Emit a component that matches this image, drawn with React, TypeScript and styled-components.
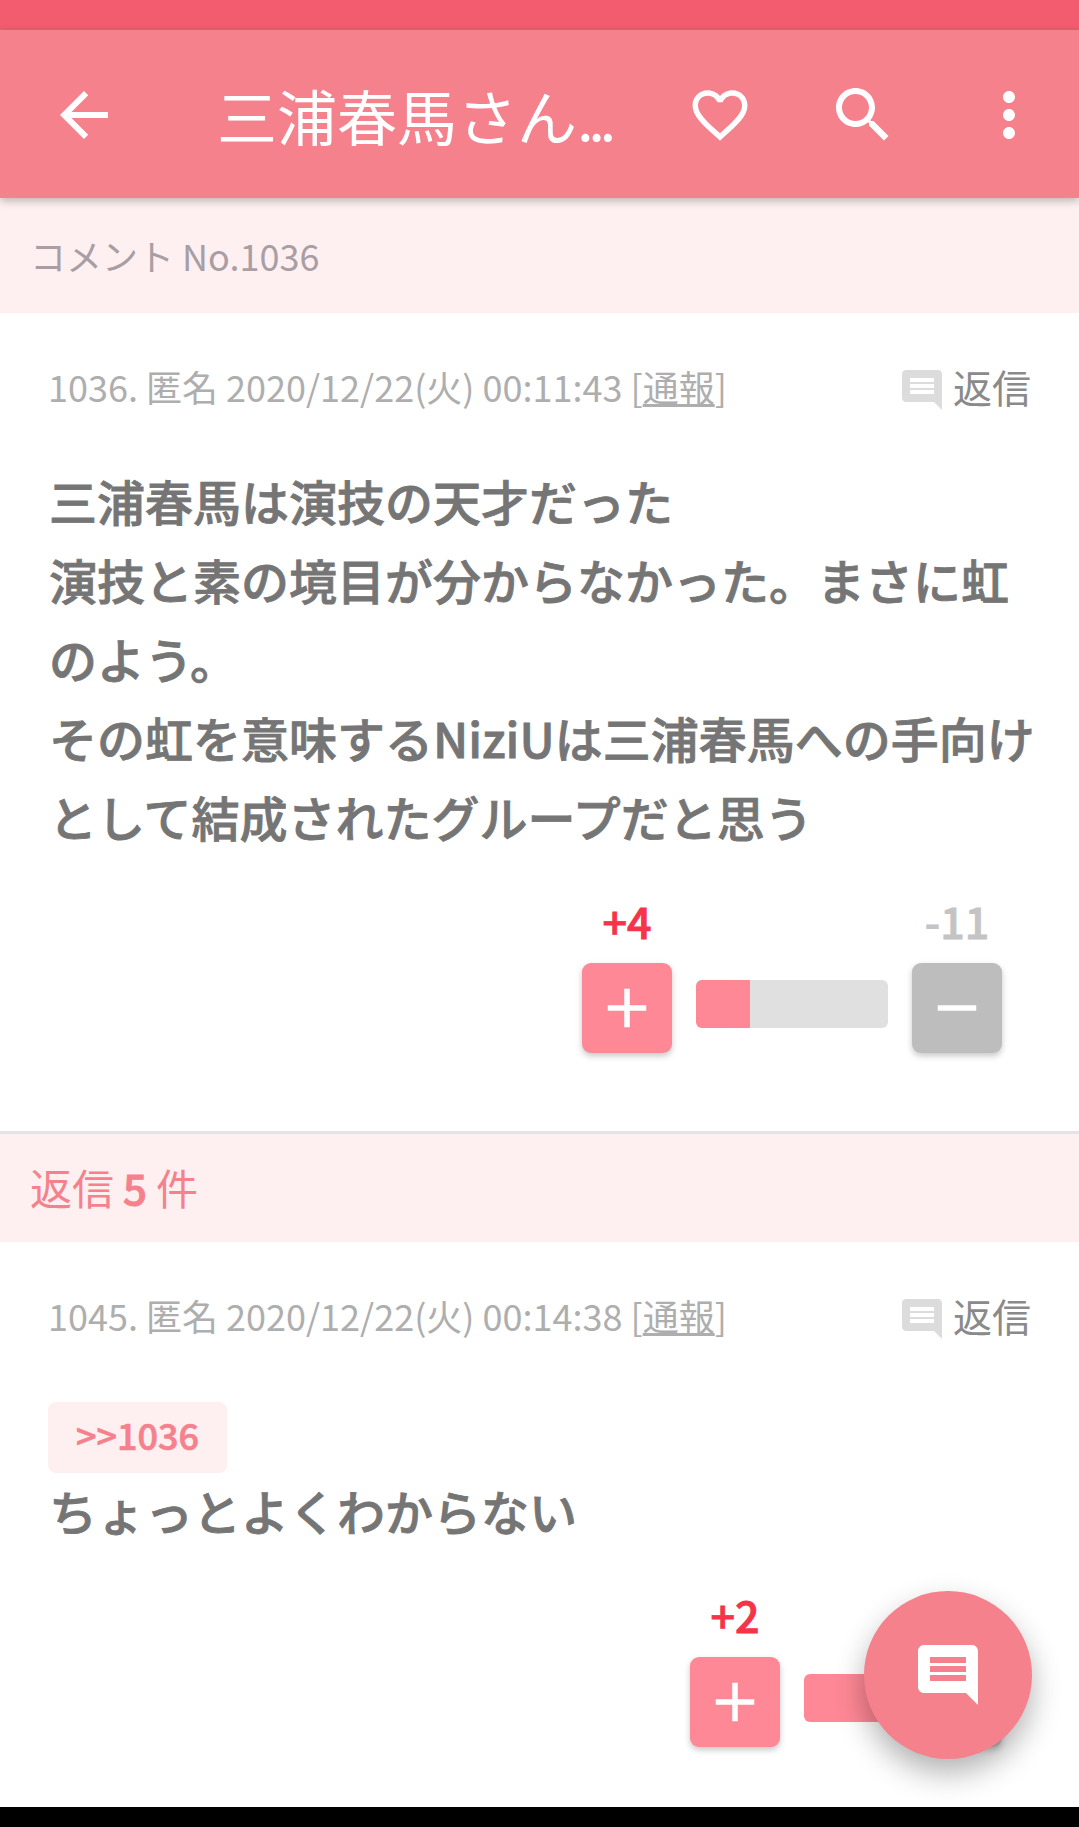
import { createGlobalStyle, styled } from 'styled-components';

const GlobalStyle = createGlobalStyle`
  html, body {
    margin: 0;
    padding: 0;
    background: #fff;
    overflow: hidden;
  }
  * {
    box-sizing: border-box;
  }
`;

const icons = {
  back: 'M20 11H7.83l5.59-5.59L12 4l-8 8 8 8 1.41-1.41L7.83 13H20v-2z',
  heart:
    'M16.5 3c-1.74 0-3.41.81-4.5 2.09C10.91 3.81 9.24 3 7.5 3 4.42 3 2 5.42 2 8.5c0 3.78 3.4 6.86 8.55 11.54L12 21.35l1.45-1.32C18.6 15.36 22 12.28 22 8.5 22 5.42 19.58 3 16.5 3zm-4.4 15.55l-.1.1-.1-.1C7.14 14.24 4 11.39 4 8.5 4 6.5 5.5 5 7.5 5c1.54 0 3.04.99 3.57 2.36h1.87C13.46 5.99 14.96 5 16.5 5c2 0 3.5 1.5 3.5 3.5 0 2.89-3.14 5.74-7.9 10.05z',
  search:
    'M15.5 14h-.79l-.28-.27C15.41 12.59 16 11.11 16 9.5 16 5.91 13.09 3 9.5 3S3 5.91 3 9.5 5.91 16 9.5 16c1.61 0 3.09-.59 4.23-1.57l.27.28v.79l5 4.99L20.49 19l-4.99-5zm-6 0C7.01 14 5 11.99 5 9.5S7.01 5 9.5 5 14 7.01 14 9.5 11.99 14 9.5 14z',
  more: 'M12 8c1.1 0 2-.9 2-2s-.9-2-2-2-2 .9-2 2 .9 2 2 2zm0 2c-1.1 0-2 .9-2 2s.9 2 2 2 2-.9 2-2-.9-2-2-2zm0 6c-1.1 0-2 .9-2 2s.9 2 2 2 2-.9 2-2-.9-2-2-2z',
  comment:
    'M21.99 4c0-1.1-.89-2-1.99-2H4c-1.1 0-2 .9-2 2v12c0 1.1.9 2 2 2h14l4 4-.01-18zM18 14H6v-2h12v2zm0-3H6V9h12v2zm0-3H6V6h12v2z',
  plus: 'M19 13h-6v6h-2v-6H5v-2h6V5h2v6h6v2z',
  minus: 'M19 13H5v-2h14v2z',
};

function Icon({ d, size, color }: { d: string; size: number; color: string }) {
  return (
    <svg width={size} height={size} viewBox="0 0 24 24" fill={color}>
      <path d={d} />
    </svg>
  );
}

function Votes({
  plus,
  minus,
  barWidth,
  fill,
}: {
  plus: string;
  minus: string;
  barWidth: number;
  fill: number;
}) {
  return (
    <VoteRow>
      <VoteColumn>
        <VoteCount $good>{plus}</VoteCount>
        <VoteButton $good>
          <Icon d={icons.plus} size={66} color="#fff" />
        </VoteButton>
      </VoteColumn>
      <Bar $width={barWidth}>
        <BarFill style={{ width: `${fill}%` }} />
      </Bar>
      <VoteColumn>
        <VoteCount>{minus}</VoteCount>
        <VoteButton>
          <Icon d={icons.minus} size={66} color="#fff" />
        </VoteButton>
      </VoteColumn>
    </VoteRow>
  );
}

function MetaLine({ no, date }: { no: string; date: string }) {
  return (
    <Meta>
      <MetaText>
        {no}. 匿名 {date} [<u>通報</u>]
      </MetaText>
      <ReplyLink>
        <Icon d={icons.comment} size={48} color="#dcdcdc" />
        <span>返信</span>
      </ReplyLink>
    </Meta>
  );
}

function App() {
  return (
    <Page>
      <GlobalStyle />
      <StatusBar />
      <Toolbar>
        <BackSlot>
          <Icon d={icons.back} size={72} color="#fff" />
        </BackSlot>
        <Title>
          三浦春馬さん<Dots>...</Dots>
        </Title>
        <Actions>
          <Icon d={icons.heart} size={66} color="#fff" />
          <Icon d={icons.search} size={72} color="#fff" />
          <Icon d={icons.more} size={72} color="#fff" />
        </Actions>
      </Toolbar>
      <Content>
        <SectionHeader $tall>コメント No.1036</SectionHeader>
        <Comment>
          <MetaLine no="1036" date="2020/12/22(火) 00:11:43" />
          <Body>
            三浦春馬は演技の天才だった
            <br />
            演技と素の境目が分からなかった。まさに虹のよう。
            <br />
            その虹を意味するNiziUは三浦春馬への手向けとして結成されたグループだと思う
          </Body>
          <Votes plus="+4" minus="-11" barWidth={192} fill={28} />
        </Comment>
        <Divider />
        <SectionHeader $accent>
          返信 <strong>5</strong> 件
        </SectionHeader>
        <Comment>
          <MetaLine no="1045" date="2020/12/22(火) 00:14:38" />
          <Anchor>&gt;&gt;1036</Anchor>
          <ReplyBody>ちょっとよくわからない</ReplyBody>
          <Votes plus="+2" minus="0" barWidth={84} fill={100} />
        </Comment>
      </Content>
      <NavBar />
      <Fab>
        <Icon d={icons.comment} size={72} color="#fff" />
      </Fab>
    </Page>
  );
}
export default App;

const Page = styled.div`
  position: relative;
  display: flex;
  flex-direction: column;
  width: 1079px;
  height: 1827px;
  overflow: hidden;
  background: #fff;
  font-family: 'Noto Sans CJK JP', 'Noto Sans', sans-serif;
`;

const StatusBar = styled.div`
  flex: none;
  height: 30px;
  background: #f35c6e;
  border-bottom: 3px solid #ea606f;
`;

const Toolbar = styled.header`
  position: relative;
  z-index: 2;
  flex: none;
  display: flex;
  align-items: center;
  height: 168px;
  padding-top: 2px;
  background: #f5818d;
  box-shadow: 0 3px 8px rgba(0, 0, 0, 0.25);
  color: #fff;
`;

const BackSlot = styled.div`
  flex: none;
  display: flex;
  width: 217px;
  padding-left: 48px;
`;

const Title = styled.div`
  flex: none;
  width: 470px;
  font-size: 60px;
  line-height: 1;
  white-space: nowrap;
`;

const Dots = styled.span`
  letter-spacing: -0.09em;
`;

const Actions = styled.div`
  display: flex;
  align-items: center;
  gap: 74px;
`;

const Content = styled.main`
  flex: 1;
  min-height: 0;
  overflow: hidden;
`;

const SectionHeader = styled.div<{ $tall?: boolean; $accent?: boolean }>`
  display: flex;
  align-items: center;
  gap: 9px;
  height: ${(p) => (p.$tall ? '115px' : '108px')};
  padding-left: 30px;
  padding-bottom: ${(p) => (p.$tall ? '2px' : '4px')};
  background: #fef0f1;
  color: ${(p) => (p.$accent ? '#f5818d' : '#a89ea4')};
  font-size: ${(p) => (p.$accent ? '42px' : '36px')};

  strong {
    font-weight: 500;
    -webkit-text-stroke: 1px #f5818d;
  }
`;

const Comment = styled.article`
  padding: 46px 0 0;
`;

const Meta = styled.div`
  display: flex;
  align-items: center;
  justify-content: space-between;
  height: 54px;
  padding: 0 48px;
`;

const MetaText = styled.span`
  color: #aeaeae;
  font-size: 36px;
  line-height: 54px;
  white-space: nowrap;
`;

const ReplyLink = styled.span`
  display: flex;
  align-items: center;
  gap: 7px;
  color: #8a8a8a;
  font-size: 39px;

  svg {
    margin-top: 8px;
  }
`;

const Body = styled.p`
  margin: 48px 0 0;
  padding: 0 30px 0 49px;
  color: #757575;
  font-size: 48px;
  font-weight: 500;
  -webkit-text-stroke: 0.8px #757575;
  line-height: 79px;
`;

const Anchor = styled.div`
  width: 179px;
  height: 71px;
  margin: 60px 0 0 48px;
  border-radius: 8px;
  background: #fef0f1;
  color: #f5818d;
  font-size: 36px;
  font-weight: 500;
  -webkit-text-stroke: 0.7px #f5818d;
  line-height: 65px;
  text-align: center;
`;

const ReplyBody = styled(Body)`
  margin-top: -2px;
`;

const VoteRow = styled.div`
  display: flex;
  align-items: flex-end;
  justify-content: flex-end;
  gap: 24px;
  margin-top: 37px;
  padding-right: 77px;
`;

const VoteColumn = styled.div`
  display: flex;
  flex-direction: column;
  align-items: center;
  gap: 16px;
`;

const VoteCount = styled.div<{ $good?: boolean }>`
  color: ${(p) => (p.$good ? '#f5344a' : '#c4c4c4')};
  font-size: 43px;
  font-weight: 500;
  -webkit-text-stroke: 0.9px ${(p) => (p.$good ? '#f5344a' : '#c4c4c4')};
  line-height: 54px;
`;

const VoteButton = styled.div<{ $good?: boolean }>`
  display: flex;
  align-items: center;
  justify-content: center;
  width: 90px;
  height: 90px;
  border-radius: 9px;
  background: ${(p) => (p.$good ? '#ff8896' : '#bdbdbd')};
  box-shadow: 0 3px 6px rgba(0, 0, 0, 0.22);
`;

const Bar = styled.div<{ $width: number }>`
  width: ${(p) => p.$width}px;
  height: 48px;
  margin-bottom: 25px;
  border-radius: 6px;
  overflow: hidden;
  background: #e0e0e0;
`;

const BarFill = styled.div`
  height: 100%;
  background: #ff8896;
`;

const Divider = styled.div`
  height: 3px;
  margin-top: 78px;
  background: #e4e4e4;
`;

const NavBar = styled.div`
  flex: none;
  height: 20px;
  background: #000;
`;

const Fab = styled.div`
  position: absolute;
  left: 864px;
  top: 1591px;
  display: flex;
  align-items: center;
  justify-content: center;
  width: 168px;
  height: 168px;
  border-radius: 50%;
  background: #f5818d;
  box-shadow: 0 14px 30px rgba(0, 0, 0, 0.3);
`;
